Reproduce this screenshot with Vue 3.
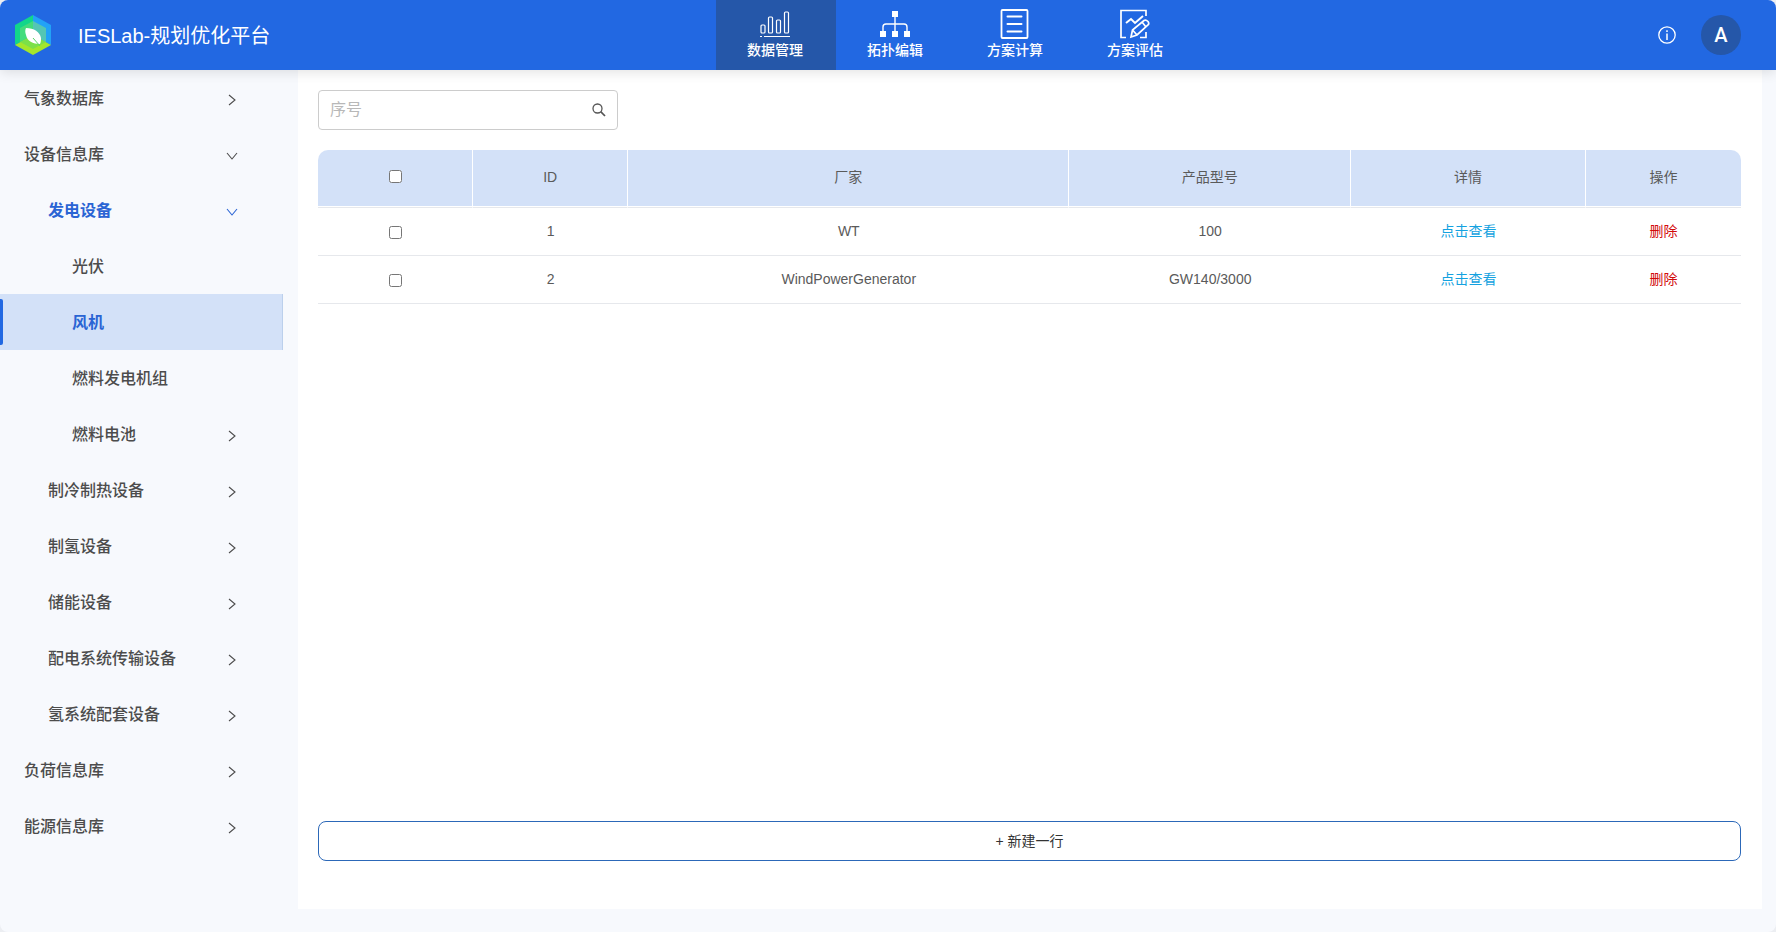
<script setup>
import { ref } from 'vue'

const active = ref('风机')
const keyword = ref('')
const nav = [
  { label: '数据管理', icon: 'chart' },
  { label: '拓扑编辑', icon: 'tree' },
  { label: '方案计算', icon: 'list' },
  { label: '方案评估', icon: 'edit' }
]
const menu = [
  { label: '气象数据库', level: 1, arrow: 'right' },
  { label: '设备信息库', level: 1, arrow: 'down' },
  { label: '发电设备', level: 2, arrow: 'down', open: true },
  { label: '光伏', level: 3 },
  { label: '风机', level: 3 },
  { label: '燃料发电机组', level: 3 },
  { label: '燃料电池', level: 3, arrow: 'right' },
  { label: '制冷制热设备', level: 2, arrow: 'right' },
  { label: '制氢设备', level: 2, arrow: 'right' },
  { label: '储能设备', level: 2, arrow: 'right' },
  { label: '配电系统传输设备', level: 2, arrow: 'right' },
  { label: '氢系统配套设备', level: 2, arrow: 'right' },
  { label: '负荷信息库', level: 1, arrow: 'right' },
  { label: '能源信息库', level: 1, arrow: 'right' }
]
const rows = [
  { id: 1, maker: 'WT', model: '100' },
  { id: 2, maker: 'WindPowerGenerator', model: 'GW140/3000' }
]
</script>

<template>
  <div class="page">
    <header class="header">
      <div class="brand">
        <svg class="logo" viewBox="0 0 36 40" aria-hidden="true">
          <path d="M18 0 0 10v20l18-10z" fill="#12d68a" />
          <path d="M18 0 36 10v20L18 20z" fill="#22a2f6" />
          <path d="M0 30 18 20l18 10-18 10z" fill="#a4e62c" />
          <path d="M18 6 5 13v14l13-7z" fill="#43dc7c" />
          <path d="M18 6 31 13v14l-13-7z" fill="#54c6b4" />
          <path d="M5 27 18 20l13 7-13 7z" fill="#7be049" />
          <path d="M11 13c8 0 14 4 15 10 0 2 0 4-1 6-7 0-13-3-14-9-1-3-1-5 0-7z" fill="#fff" />
          <path d="m18 23 7 8" stroke="#58d663" stroke-width="1" />
        </svg>
        <span class="title">IESLab-规划优化平台</span>
      </div>
      <nav class="nav">
        <a v-for="(n, i) in nav" :key="n.label" href="#" class="nav-item" :class="{ current: i === 0 }">
          <svg v-if="n.icon === 'chart'" viewBox="0 0 30 30" fill="none" stroke="#fff" stroke-width="1.2">
            <rect x="1" y="16" width="4" height="8" rx="1" />
            <rect x="8.500" y="8" width="4" height="16" rx="1" />
            <rect x="16.500" y="11" width="4" height="13" rx="1" />
            <rect x="24.500" y="3" width="4" height="21" rx="1" />
            <path d="M0 27.500h2M4 27.500h26" />
          </svg>
          <svg v-else-if="n.icon === 'tree'" viewBox="0 0 30 30" fill="#fff">
            <path d="M12 2h6v6h-6zM0 22h6v6H0zM12 22h6v6h-6zM24 22h6v6h-6z" />
            <path d="M15 8v14M3 22v-4q0-3 3-3h18q3 0 3 3v4" fill="none" stroke="#fff" stroke-width="1.400" />
          </svg>
          <svg v-else-if="n.icon === 'list'" viewBox="0 0 30 30" fill="none" stroke="#fff" stroke-width="1.800">
            <rect x="1.500" y="1" width="26" height="28" rx="1" />
            <path d="M7.500 7.500h14M7.500 15h14M7.500 22.500h14" stroke-width="2" stroke-linecap="round" />
          </svg>
          <svg v-else viewBox="0 0 30 30" fill="none" stroke="#fff" stroke-width="1.700">
            <path d="M26 7V1.500H1v27h5M20 28.500h6V23" />
            <path d="m6 14 5-4 4 4 8-7" stroke-width="2" />
            <path d="m11 28 1.500-7L24 11.500q2-1 4 1 1.500 2 0 3.500L17 26z" />
            <path d="m22 13 4 5M12.500 21l4.500 5" />
          </svg>
          <span>{{ n.label }}</span>
        </a>
      </nav>
      <div class="tools">
        <button class="info" type="button" aria-label="信息">
          <svg viewBox="0 0 18 18" fill="none" stroke="#fff" stroke-width="1.300">
            <circle cx="9" cy="9" r="8.200" />
            <path d="M9 7.500V14M9 4.300v1.700" stroke-width="1.500" />
          </svg>
        </button>
        <button class="avatar" type="button">A</button>
      </div>
    </header>

    <div class="body">
      <aside class="sidebar">
        <button
          v-for="m in menu"
          :key="m.label"
          type="button"
          class="menu-item"
          :class="['level-' + m.level, { open: m.open, selected: m.label === active }]"
          @click="active = m.label"
        >
          <span>{{ m.label }}</span>
          <svg v-if="m.arrow" class="arrow" viewBox="0 0 12 12" fill="none" stroke="currentColor" stroke-width="1.1">
            <path :d="m.arrow === 'down' ? 'm1 3 5 6 5-6' : 'm3 1 6 5-6 5'" />
          </svg>
        </button>
      </aside>

      <main class="main">
        <div class="search">
          <input v-model="keyword" type="text" placeholder="序号" aria-label="序号" />
          <button type="button" aria-label="搜索">
            <svg viewBox="0 0 14 14" fill="none" stroke="#555">
              <circle cx="5.500" cy="5.500" r="4.500" stroke-width="1.300" />
              <path d="m8.700 8.700 4.300 4.300" stroke-width="1.700" />
            </svg>
          </button>
        </div>

        <table class="table">
          <colgroup>
            <col class="narrow" /><col class="narrow" /><col class="maker" />
            <col class="model" /><col class="detail" /><col class="narrow" />
          </colgroup>
          <thead>
            <tr>
              <th><input type="checkbox" aria-label="全选" /></th>
              <th>ID</th>
              <th>厂家</th>
              <th>产品型号</th>
              <th>详情</th>
              <th>操作</th>
            </tr>
          </thead>
          <tbody>
            <tr v-for="r in rows" :key="r.id">
              <td class="check"><input type="checkbox" :aria-label="r.maker" /></td>
              <td>{{ r.id }}</td>
              <td>{{ r.maker }}</td>
              <td>{{ r.model }}</td>
              <td><a href="#" class="view">点击查看</a></td>
              <td><a href="#" class="remove">删除</a></td>
            </tr>
          </tbody>
        </table>

        <button class="add" type="button">+ 新建一行</button>
      </main>
    </div>
  </div>
</template>

<style>
html {
  background: #eceef2;
}
</style>

<style scoped>
.page,
.page * {
  box-sizing: border-box;
}
.page {
  display: flex;
  flex-direction: column;
  min-height: 100vh;
  overflow: hidden;
  border-radius: 8px;
  background: #f7f9fd;
  color: #5a5a5a;
  font-family: "Liberation Sans", "Noto Sans CJK SC", sans-serif;
  font-size: 14px;
}
button {
  padding: 0;
  border: 0;
  background: none;
  color: inherit;
  font: inherit;
  cursor: pointer;
}
a {
  text-decoration: none;
}
svg {
  display: block;
}
.header {
  display: grid;
  grid-template-columns: 716fr 480px 580fr;
  height: 70px;
  background: #2268e2;
  color: #fff;
  box-shadow: 0 2px 12px rgba(0, 0, 0, 0.12);
  position: relative;
}
.brand {
  display: flex;
  align-items: center;
  gap: 27px;
  padding-left: 15px;
}
.logo {
  width: 36px;
  height: 40px;
}
.title {
  padding-bottom: 2px;
  font-size: 20px;
}
.nav {
  display: flex;
}
.nav-item {
  display: flex;
  flex: 1;
  flex-direction: column;
  align-items: center;
  padding: 9px 2px 0 0;
  color: #fff;
  font-weight: 500;
  line-height: 22px;
}
.nav-item svg {
  width: 30px;
  height: 30px;
}
.nav-item.current {
  background: #2557a9;
}
.tools {
  display: flex;
  align-items: center;
  justify-content: flex-end;
  gap: 25px;
  padding-right: 35px;
}
.info svg {
  width: 18px;
  height: 18px;
}
.avatar {
  width: 40px;
  height: 40px;
  border-radius: 50%;
  background: #2557a9;
  font-family: Roboto, sans-serif;
  font-size: 20px;
  font-weight: 500;
}
.body {
  display: flex;
  flex: 1;
  padding: 0 14px 23px 0;
}
.sidebar {
  flex: none;
  width: 298px;
  padding-right: 15px;
}
.menu-item {
  display: flex;
  align-items: center;
  justify-content: space-between;
  width: 100%;
  height: 56px;
  padding-right: 45px;
  padding-bottom: 2px;
  color: #4c4c4c;
  font-size: 16px;
  font-weight: 500;
  text-align: left;
}
.level-1 {
  padding-left: 24px;
}
.level-2 {
  padding-left: 48px;
}
.level-3 {
  padding-left: 72px;
}
.open,
.selected {
  color: #2a64d4;
  font-weight: 700;
}
.selected {
  position: relative;
  border-right: 1px solid #bcd0ec;
  background: #d3e1f8;
}
.selected::before {
  content: "";
  position: absolute;
  top: 5px;
  bottom: 5px;
  left: 0;
  width: 3px;
  border-radius: 0 2px 2px 0;
  background: #2268e2;
}
.arrow {
  width: 12px;
  height: 12px;
  margin-top: 5px;
}
.main {
  display: flex;
  flex: 1;
  flex-direction: column;
  align-items: stretch;
  min-width: 0;
  padding: 20px 21px 48px 20px;
  background: #fff;
}
.search {
  display: flex;
  align-items: center;
  width: 300px;
  height: 40px;
  margin-bottom: 20px;
  padding: 0 11px;
  border: 1px solid #ccc;
  border-radius: 4px;
}
.search input {
  flex: 1;
  min-width: 0;
  padding: 0;
  border: 0;
  outline: 0;
  background: none;
  color: #555;
  font: inherit;
  font-size: 16px;
}
.search input::placeholder {
  color: #b8b8b8;
}
.search svg {
  width: 14px;
  height: 14px;
}
.table {
  width: 100%;
  border-spacing: 0;
  line-height: 20px;
  table-layout: fixed;
}
.narrow {
  width: 10.9%;
}
.maker {
  width: 31%;
}
.model {
  width: 19.8%;
}
.detail {
  width: 16.5%;
}
th,
td {
  padding: 0 0 2px;
  border-bottom: 1px solid #e6e8ec;
  text-align: center;
}
th {
  height: 58px;
  padding-bottom: 4px;
  border-right: 1px solid #fff;
  background: linear-gradient(#d3e1f8 56px, #fff 56px);
  font-weight: 400;
}
th:first-child {
  border-top-left-radius: 10px;
}
th:last-child {
  border-right: 0;
  border-top-right-radius: 10px;
}
td {
  height: 48px;
}
td.check {
  padding: 2px 0 0;
}
th input,
td input {
  display: block;
  width: 13px;
  height: 13px;
  margin: 0 auto;
}
.view {
  color: #14a2e0;
}
.remove {
  color: #d20a0a;
}
.add {
  height: 40px;
  margin-top: auto;
  padding-bottom: 2px;
  border: 1px solid #2c68b8;
  border-radius: 8px;
  color: #333;
}
</style>
